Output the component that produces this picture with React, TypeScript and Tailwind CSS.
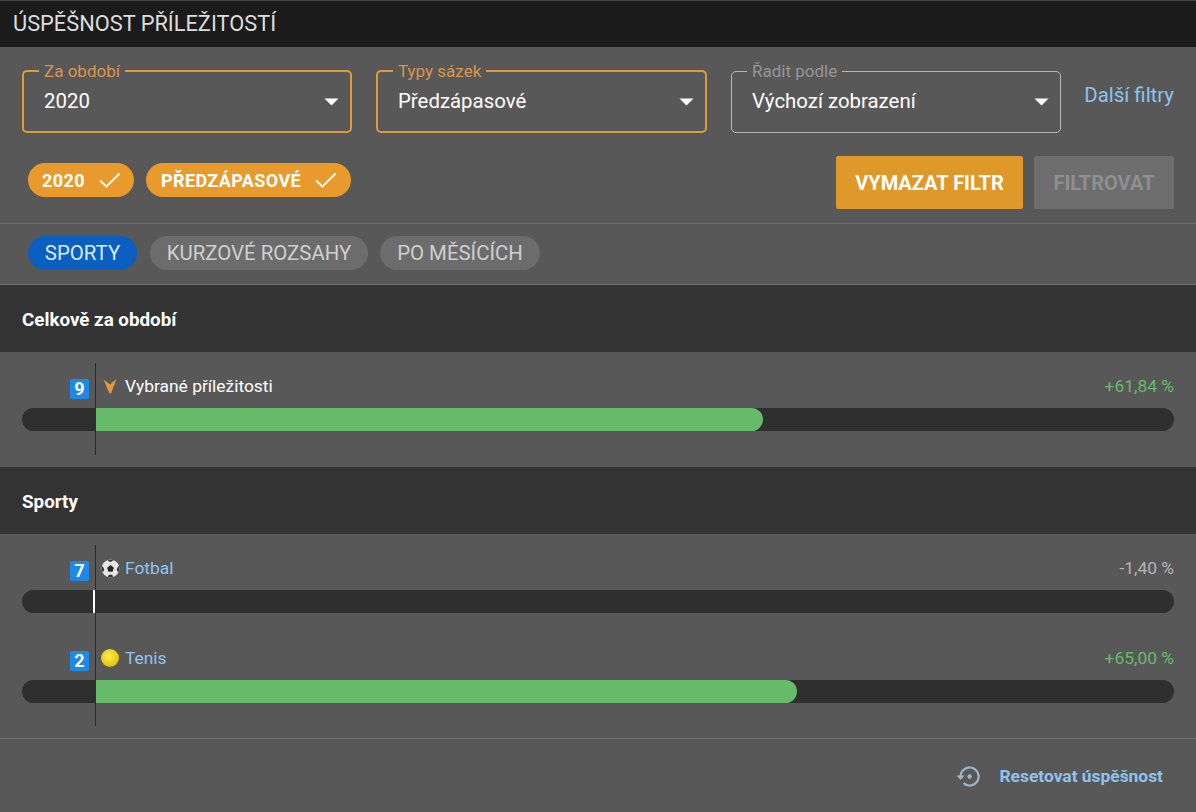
import React from "react";

const font = { fontFamily: "Roboto, sans-serif" };

function Caret() {
  return (
    <svg width="15" height="8" viewBox="0 0 15 8" className="shrink-0">
      <path d="M0.5 0.5H14.5L7.5 7.5Z" fill="#fff" />
    </svg>
  );
}

function Check() {
  return (
    <svg width="23" height="18" viewBox="0 0 23 18" fill="none" className="shrink-0">
      <path d="M2 9.5L8.5 15.5L21.5 2.5" stroke="#fff" strokeWidth="1.8" />
    </svg>
  );
}

function Select({ label, value, active, disabled, cls }: { label: string; value: string; active?: boolean; disabled?: boolean; cls: string }) {
  return (
    <fieldset className={`h-[69px] -mt-[7px] rounded-[5px] border pl-[15px] pr-[11px] ${active ? "border-2 border-[#e09a3a] pl-[14px] pr-[10px]" : "border-[#b8b8b8]"} ${cls}`}>
      <legend className={`px-[5px] text-[17px] leading-[14px] ${active ? "text-[#d9954a]" : disabled ? "text-[#969696]" : ""}`}>{label}</legend>
      <div className="flex items-center justify-between h-[47px] pl-[5px] text-[20.4px] text-white">
        <span>{value}</span>
        <Caret />
      </div>
    </fieldset>
  );
}

function Football() {
  return (
    <svg width="19" height="19" viewBox="0 0 18 18" className="shrink-0">
      <circle cx="9" cy="9" r="8.5" fill="#e6e6e6" />
      <path d="M9 5.8L12.2 8.2L11 12H7L5.8 8.2Z" fill="#262626" />
      <path d="M9 .6C7.9.6 6.9.9 6 1.4L9 2.8L12 1.3C11.1.8 10.1.6 9 .6ZM.7 9.6C.8 10.8 1.2 11.8 1.9 12.8L3 10L1.6 6.6C1 7.5.7 8.5.7 9.6ZM17.3 9.2C17.3 8.2 17 7.3 16.5 6.4L14.9 10L16.2 12.9C16.9 11.9 17.3 10.6 17.3 9.2ZM6.4 16.9C8 17.5 10 17.5 11.6 16.9L10.4 15H7.6Z" fill="#333" />
    </svg>
  );
}

function TennisBall() {
  return <span className="block w-[18px] h-[18px] shrink-0 rounded-full bg-[radial-gradient(circle_at_45%_40%,#fff04a,#e5c40f_65%,#a88c10)]" />;
}

function Chosen() {
  return (
    <svg width="15" height="16" viewBox="0 0 15 16" className="shrink-0 ml-[2px]">
      <path d="M0.5 1.5L7 6.5L13.5 .8L8 15.5H6.5Z" fill="#e29a3c" />
    </svg>
  );
}

function StatRow({ count, icon, name, link, value, pct, valueCls, zero }: { count: number; icon: React.ReactNode; name: string; link?: boolean; value: string; pct?: number; valueCls: string; zero?: boolean }) {
  return (
    <div className="h-[90px] px-[22px] pt-[22px]">
      <div className="flex items-center h-[24px]">
        <span className="w-[48px]" />
        <span className="w-[19px] h-[20px] mt-[5px] rounded-[2px] bg-[#1e88e5] text-white text-[18px] font-bold leading-[20px] text-center">{count}</span>
        <span className="w-[12px]" />
        <span className="w-[24px] flex">{icon}</span>
        <span className={`text-[17.4px] ${link ? "text-[#90c4ee]" : "text-white"}`}>{name}</span>
        <span className={`ml-auto text-[17.4px] ${valueCls}`}>{value}</span>
      </div>
      <div className="relative mt-[10px] h-[23px] rounded-full bg-[#2f2f2f] overflow-hidden">
        {pct !== undefined && (
          <div className="absolute left-[74px] top-0 h-full rounded-r-full bg-[#66bb6a]" style={{ width: `${pct}px` }} />
        )}
        {zero && <div className="absolute left-[71px] top-0 h-full w-[2px] bg-white" />}
      </div>
    </div>
  );
}

function Axis() {
  return <div className="absolute left-[95px] top-[11px] bottom-[12px] w-px bg-[#2b2b2b]" />;
}

function Section({ title }: { title: string }) {
  return (
    <div className="h-[67px] flex items-center pl-[22px] bg-[#333333] text-white text-[18.8px] font-bold pt-[4px]">{title}</div>
  );
}

function Tab({ label, active, cls }: { label: string; active?: boolean; cls: string }) {
  return (
    <div className={`h-[34px] rounded-full flex items-center justify-center text-[20.4px] whitespace-nowrap ${active ? "bg-[#0a5fc0] text-[#d9ecff]" : "bg-[#6c6c6c] text-[#cfcfcf]"} ${cls}`}>
      {label}
    </div>
  );
}

export default function App() {
  return (
    <div style={font} className="w-[1196px] h-[812px] overflow-hidden bg-[#585858]">
      <div className="h-[47px] pl-[13px] flex items-center bg-[#1b1b1b] text-[#dddddd] text-[21.8px] border-t border-[#444]">ÚSPĚŠNOST PŘÍLEŽITOSTÍ</div>

      <div className="h-[177px] border-b border-[#6e6e6e] pl-[22px] pr-[22px] pt-[24px]">
        <div className="flex items-start">
          <Select label="Za období" value="2020" active cls="w-[330px]" />
          <Select label="Typy sázek" value="Předzápasové" active cls="w-[331px] ml-[24px]" />
          <Select label="Řadit podle" value="Výchozí zobrazení" disabled cls="w-[330px] ml-[24px]" />
          <span className="ml-auto mt-[12px] text-[20.4px] leading-[24px] text-[#8ec3ee]">Další filtry</span>
        </div>
        <div className="flex items-start mt-[23px]">
          <div className="flex items-center mt-[7px] ml-[6px] gap-[12px]">
            <div className="h-[34px] w-[106px] pl-[14px] pr-[13px] rounded-full bg-[#e89b2c] flex items-center justify-between text-white font-bold text-[18px] tracking-[0.4px]">2020 <Check /></div>
            <div className="h-[34px] w-[205px] pl-[15px] pr-[14px] rounded-full bg-[#e89b2c] flex items-center justify-between text-white font-bold text-[18px] tracking-[0.4px]">PŘEDZÁPASOVÉ <Check /></div>
          </div>
          <button className="ml-auto w-[187px] h-[53px] rounded-[2px] bg-[#df982a] text-white font-bold text-[20px]">VYMAZAT FILTR</button>
          <button className="ml-[11px] w-[140px] h-[53px] rounded-[2px] bg-[#6e6e6e] text-[#8f8f8f] font-bold text-[20px]">FILTROVAT</button>
        </div>
      </div>

      <div className="h-[61px] border-b border-[#6e6e6e] pl-[28px] pt-[12px] flex items-start gap-[12px]">
        <Tab label="SPORTY" active cls="w-[109px]" />
        <Tab label="KURZOVÉ ROZSAHY" cls="w-[218px] ml-[1px]" />
        <Tab label="PO MĚSÍCÍCH" cls="w-[160px]" />
      </div>

      <Section title="Celkově za období" />
      <div className="relative h-[115px]">
        <Axis />
        <StatRow count={9} icon={<Chosen />} name="Vybrané příležitosti" value="+61,84 %" pct={667} valueCls="text-[#66bb6a]" />
      </div>

      <Section title="Sporty" />
      <div className="relative h-[205px] border-b border-[#6e6e6e]">
        <Axis />
        <StatRow count={7} icon={<Football />} name="Fotbal" link value="-1,40 %" valueCls="text-[#b5b5b5]" zero />
        <StatRow count={2} icon={<TennisBall />} name="Tenis" link value="+65,00 %" pct={701} valueCls="text-[#66bb6a]" />
      </div>

      <div className="h-[74px] flex items-center justify-end pr-[33px]">
        <svg width="27" height="27" viewBox="0 0 24 24" fill="none" className="mr-[17px]">
          <path d="M5 12a8 8 0 1 1 2.6 5.9" stroke="#9fb4c6" strokeWidth="2" />
          <path d="M1.4 11H8.6L5 15.2Z" fill="#9fb4c6" />
          <circle cx="13" cy="12" r="2" fill="#9fb4c6" />
        </svg>
        <span className="text-[17.4px] font-bold text-[#8ec3ee]">Resetovat úspěšnost</span>
      </div>
    </div>
  );
}
